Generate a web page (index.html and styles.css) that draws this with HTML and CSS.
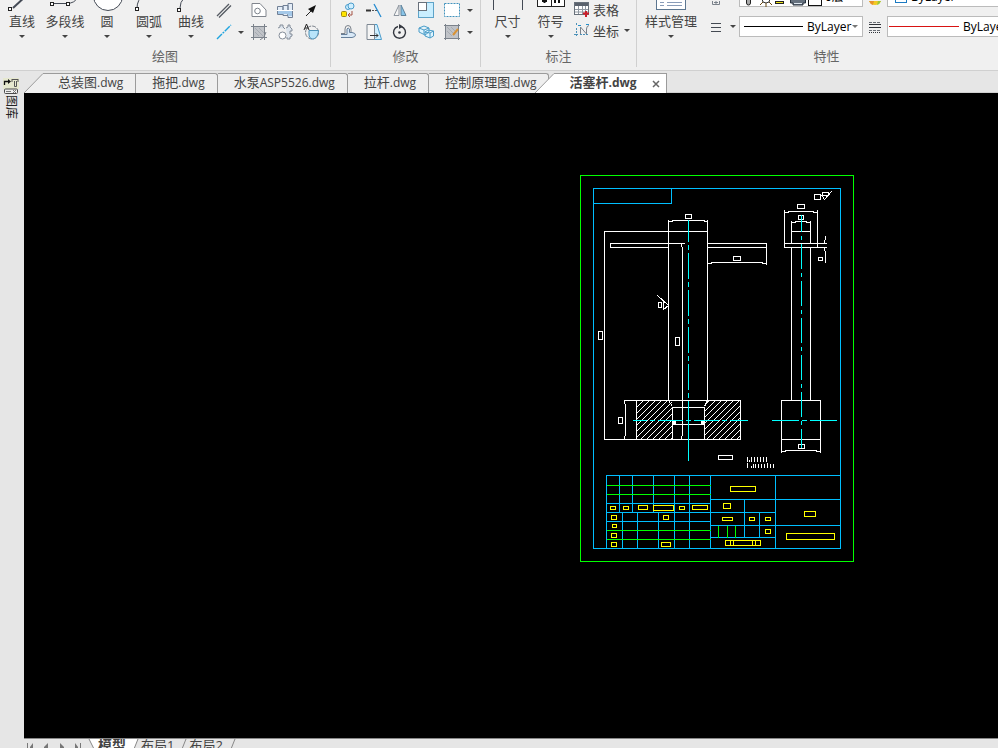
FILE: index.html
```html
<!DOCTYPE html>
<html lang="zh-CN">
<head>
  <meta charset="UTF-8" />
  <meta name="viewport" content="width=device-width, initial-scale=1.0"/>
  <title>活塞杆.dwg</title>
  <link rel="stylesheet" href="styles.css">
</head>
<body>
  <header class="ribbon">
    <!-- draw -->
    <section class="panel">
      <div class="panel-body">
        <button class="big"><svg width="30" height="12"><path d="M20 -5L6 8" stroke="#444a55" stroke-width="2"/><rect x="1.500" y="7.500" width="3" height="3" class="node"/></svg>直线<i class="caret"></i></button>
        <button class="big"><svg width="32" height="12"><path d="M4 3.500H18Q26 3 28 -2" class="ink"/><rect x="1.500" y="2.500" width="3" height="3" class="node"/><rect x="17.500" y="2.500" width="3" height="3" class="node"/></svg>多段线<i class="caret"></i></button>
        <button class="big"><svg width="32" height="12"><circle cx="17" cy="-4" r="14.500" fill="#fff" stroke="#444a55"/></svg>圆<i class="caret"></i></button>
        <button class="big"><svg width="30" height="12"><path d="M3 8Q3 0 10 -6" class="ink"/><rect x="1.500" y="7.500" width="3" height="3" class="node"/></svg>圆弧<i class="caret"></i></button>
        <button class="big"><svg width="30" height="12"><path d="M4 8Q4 2 8 -2" class="ink"/><rect x="1.500" y="8.500" width="3" height="3" class="node"/></svg>曲线<i class="caret"></i></button>
        <div class="tools draw-tools">
          <button aria-label="双线"><svg width="16" height="16"><path d="M1 14L13 2M3 15.500L15 3.500" stroke="#555a62" stroke-width="1.300"/></svg></button>
          <span></span>
          <button aria-label="边界"><svg width="16" height="16"><path d="M1 1.500H9L15 8V14.500H1Z" fill="#fff" stroke="#80858d"/><circle cx="6.500" cy="9" r="2.800" class="thin"/></svg></button>
          <button aria-label="轴"><svg width="16" height="16"><path d="M.5 4.500H6V12.500H.5ZM6 3.500H11V13.500H6ZM11 1.500H15.500V15.500H11Z" fill="#e4edf7" stroke="#718096"/><path d="M1 9H15V14H11V12H1Z" fill="#a4c8e8"/><path d="M0 8.500H16" stroke="#fff"/></svg></button>
          <button aria-label="箭头"><svg width="16" height="16"><path d="M3 14L9 8" stroke="#222"/><path d="M13 3L5 7L10 11Z" fill="#111"/></svg></button>
          <button aria-label="构造线"><svg width="16" height="16"><path d="M1 15L15 1" stroke="#1fa4df" stroke-width="1.400" stroke-dasharray="7 1 2 1"/></svg></button>
          <button aria-label="更多"><i class="caret"></i></button>
          <button aria-label="填充"><svg width="16" height="16"><rect x="3" y="3" width="10" height="10" fill="#c0c3c8"/><path d="M0 2.500H16M2.500 0V16M13.500 0V16M0 13.500H16" class="thin"/><path d="M4 4L12 12M8 4L13 9M4 8L8 12" stroke="#a6abb2"/><path d="M9 16Q14 14 15 8" class="thin"/></svg></button>
          <button aria-label="齿轮"><svg width="16" height="16"><path d="M1 4L3 3V1H6V3L8 5M9 4L11 3V1H13V3L15 5V7H13V10H15V12L13 13V15H10V13" fill="#dce4ed" stroke="#848d99"/><circle cx="5.500" cy="11.500" r="3.500" fill="#fff" stroke="#848d99"/></svg></button>
          <button aria-label="局部视图"><svg width="16" height="16"><circle cx="9" cy="8.500" r="6.500" class="thin" stroke-dasharray="4 1"/><path d="M6 6.500H15.500C15 12 13 15 9 15Q6 14 6 11Z" fill="#b8e4fa" stroke="#4c91b8"/><path d="M1 6L3.500 0L6 6M2 4H5" stroke="#222" fill="none"/></svg></button>
        </div>
      </div>
      <h2>绘图</h2>
    </section>

    <!-- modify -->
    <section class="panel">
      <div class="panel-body">
        <div class="tools modify-tools">
          <button aria-label="复制"><svg width="16" height="16"><circle cx="8" cy="5" r="2.500" class="blue"/><circle cx="11" cy="4" r="3" class="blue"/><rect x="1.500" y="9.500" width="5" height="5" rx="1" fill="#ffe400" stroke="#a18a13"/><path d="M8 13H12V9M8 13L10 11M8 13L10 15" stroke="#a55244" fill="none"/></svg></button>
          <button aria-label="延伸"><svg width="16" height="16"><path d="M0 8.500H5" stroke="#333" stroke-width="2"/><path d="M6 8.500H12" stroke="#555" stroke-dasharray="2 1"/><path d="M8 2L15 15" stroke="#258bd0" stroke-width="1.300"/></svg></button>
          <button aria-label="镜像"><svg width="16" height="16"><path d="M7 3V13.500H2Z" fill="#f5f5f5" stroke="#8c949e"/><path d="M9 3V13.500H14Z" fill="#88c4e8" stroke="#5f839c"/></svg></button>
          <button aria-label="缩放"><svg width="16" height="16"><rect x=".5" y=".5" width="15" height="15" fill="#c9eeff" stroke="#5ea3c8"/><rect x=".5" y=".5" width="8" height="8" fill="#fff" stroke="#69717b"/></svg></button>
          <button aria-label="打断"><svg width="16" height="16"><rect x=".5" y="1.500" width="15" height="13" fill="#fff" stroke="#4192bd" stroke-dasharray="2 1"/></svg></button>
          <button aria-label="更多"><i class="caret"></i></button>
          <button aria-label="偏移"><svg width="16" height="16"><path d="M1 9.500H5V5Q5 1.500 8 1.500T11 5V8.500" class="thin"/><path d="M1 13.500H12Q15.500 13 15.500 11T12 8.500H9.500V5Q8 3 7 5V10.500H1" fill="#d9e9f7" stroke="#667f9a"/></svg></button>
          <button aria-label="拉伸"><svg width="16" height="16"><path d="M8 .5H11L15.500 15.500H8Z" class="blue"/><path d="M1 .5H8.500V15.500H1Z" fill="#f5f5f5" stroke="#7d8792"/><path d="M4 11.500H12M10 9.500L12 11.500L10 13.500" stroke="#333" fill="none"/></svg></button>
          <button aria-label="旋转"><svg width="16" height="16"><path d="M6 2.500A6 6 0 1 0 9 2.500" fill="none" stroke="#343840" stroke-width="1.400"/><path d="M7 0L11 2.500L7 5Z" fill="#343840"/><circle cx="7.500" cy="8.500" r="1.300" fill="#343840"/></svg></button>
          <button aria-label="阵列"><svg width="16" height="16"><path d="M1 4L6 2L11 4V8L7 11L1 8ZM1 4L6 6L11 4M6 6V10M7 8L10 6L15.500 7V12L12 14L7 12ZM7 8L12 9L15.500 7M12 9V14" fill="#dff5ff" stroke="#4a9cc8"/></svg></button>
          <button aria-label="编辑填充"><svg width="16" height="16"><rect x="2" y="2" width="12" height="12" fill="#c0c3c8"/><path d="M0 1.500H16M1.500 0V16M14.500 0V16M0 14.500H16" class="thin"/><path d="M3 7L8 12M3 3L11 11M7 3L12 8" stroke="#a6abb2"/><path d="M9 11L14 5" stroke="#d99335" stroke-width="2"/></svg></button>
          <button aria-label="更多"><i class="caret"></i></button>
        </div>
      </div>
      <h2>修改</h2>
    </section>

    <!-- dimension -->
    <section class="panel">
      <div class="panel-body dim-body">
        <button class="big"><svg width="32" height="12"><path d="M1.500 0V10M30.500 0V10" class="ink"/></svg>尺寸<i class="caret"></i></button>
        <button class="big"><svg width="28" height="12"><rect x=".5" y="-9.500" width="27" height="16" fill="#fff" stroke="#222"/><path d="M14.500 0V6" stroke="#222"/><path d="M5 1H10M7.500 0V3M18 0V3M22 0V3" stroke="#111" stroke-width="2"/></svg>符号<i class="caret"></i></button>
        <div class="side-tools">
          <button><svg width="16" height="16"><rect x=".5" y="1.500" width="14" height="12" fill="#fff" stroke="#68717b"/><rect x="1" y="2" width="13" height="3" fill="#59616c"/><path d="M1 8.500H14M1 11H14M4.500 5V13M8.500 5V13M11.500 5V13" stroke="#9199a2"/><path d="M9 12.500H15M12 10V16" stroke="#cc1f2b" stroke-width="2"/></svg>表格</button>
          <button><svg width="16" height="16"><path d="M2.500 1V4M2.500 6V15M0 12.500H4M6 12.500H15" stroke="#4c91b8" stroke-dasharray="2 1"/><path d="M6.500 12V5L12.500 12V7Q12.500 4 15 3.500" class="thin"/><path d="M4 3.500H7M12 2.500H15" stroke="#268fc9"/></svg>坐标<i class="caret"></i></button>
        </div>
      </div>
      <h2>标注</h2>
    </section>

    <!-- properties -->
    <section class="panel">
      <div class="panel-body">
        <button class="big style-btn"><svg width="30" height="12"><rect x=".5" y="-9.500" width="29" height="19" fill="#fff" stroke="#5c7690"/><path d="M4 2.500H8M11 2.500H26M4 5.500H8M11 5.500H26" stroke="#899cb8"/></svg>样式管理<i class="caret"></i></button>
        <div class="props">
          <svg width="10" height="6"><path d="M1.500 0V3.500H8.500V0M3 1.500H7M5 0V3" class="thin"/></svg>
          <span></span>
          <label class="combo">
            <svg width="82" height="20"><rect x="6.500" y="8" width="4" height="10" rx="2" fill="#aaa" stroke="#222"/><circle cx="26" cy="12" r="4" fill="#fff" stroke="#333"/><path d="M20 18L23 15M26 16V20M32 18L29 15" stroke="#6b4a12"/><rect x="35" y="14" width="9" height="3" fill="#222"/><rect x="36" y="15" width="7" height="1" fill="#efe51a"/><path d="M50.500 12H65.500V16H63V18H53V16H50.500Z" fill="#66717e" stroke="#26303c"/><path d="M54 16.500H62" stroke="#dde6ee"/><rect x="68.500" y="5.500" width="13" height="13" fill="#fff" stroke="#111"/></svg>
            <select aria-label="图层"><option>0层</option></select>
          </label>
          <svg width="14" height="6"><path d="M1 0H13Q11 4 7 4T1 0" fill="#f2ca22"/><path d="M1 0H6L5 4Q2 3 1 0" fill="#e8922a"/><path d="M10 0H13Q12 3 9 4Z" fill="#9bc83b"/></svg>
          <label class="combo">
            <svg width="20" height="20"><rect x="7.500" y="5.500" width="11" height="10" fill="#fff" stroke="#1b7ac2"/></svg>
            <select aria-label="颜色"><option>ByLayer</option></select>
            <i class="caret"></i>
          </label>

          <svg width="10" height="10"><path d="M0 1.500H10M0 5.500H10M0 9.500H10" stroke="#444a52"/></svg>
          <i class="caret"></i>
          <label class="combo">
            <svg width="64" height="3"><path d="M4 1.500H63" stroke="#000"/></svg>
            <select aria-label="线型"><option>ByLayer</option></select>
            <i class="caret"></i>
          </label>
          <svg width="12" height="12"><path d="M0 1.500H12M0 9.500H12" stroke="#6a6f76" stroke-dasharray="3 1"/><path d="M0 3.500H12M0 6.500H12" stroke="#30343a"/><path d="M0 11.500H12" stroke="#30343a" stroke-dasharray="1 1"/></svg>
          <label class="combo">
            <svg width="72" height="3"><path d="M1 1.500H71" stroke="#d81313"/></svg>
            <select aria-label="线宽"><option>ByLayer</option></select>
            <i class="caret"></i>
          </label>
        </div>
      </div>
      <h2>特性</h2>
    </section>
  </header>

  <div class="workspace">
    <aside class="sidebar">
      <button>
        <svg width="16" height="17"><rect width="16" height="11" fill="#e6e8cf"/><path d="M1.500 7V3.500H6" stroke="#111" stroke-width="1.300" fill="none"/><path d="M5 1L8 3.500L5 6Z" fill="#111"/><path d="M9 1.500H15M9 1V4M15 1V4M11.500 3V8.500H13.500V3" fill="none" stroke="#555"/><rect x="1.500" y="11" width="13" height="4.500" rx="1" fill="#eee" stroke="#4b4b4b"/><path d="M3 13.500H8M10 12L13 15M13 12L10 15" stroke="#777"/></svg>
        <span>图库</span>
      </button>
    </aside>

    <div class="document">
      <nav class="file-tabs">
        <button class="tab first"><svg class="slant" width="20" height="20"><path d="M0 20L19 .5H20V20Z" fill="#efefef"/><path d="M0 20L19 .5H20" fill="none" stroke="#9b9b9b"/></svg><span class="tab-name">总装图<small>.dwg</small></span></button>
        <button class="tab"><span class="tab-name">拖把<small>.dwg</small></span></button>
        <button class="tab"><span class="tab-name">水泵<small>ASP5526.dwg</small></span></button>
        <button class="tab"><span class="tab-name">拉杆<small>.dwg</small></span></button>
        <button class="tab"><span class="tab-name">控制原理图<small>.dwg</small></span></button>
        <button class="tab active"><svg class="slant" width="20" height="20"><path d="M0 20L19 .5H20V20Z" fill="#fff"/><path d="M0 20L19 .5H20" fill="none" stroke="#9b9b9b"/></svg><span class="tab-name">活塞杆<small>.dwg</small></span><svg class="close" width="8" height="8"><path d="M1 1L7 7M7 1L1 7" stroke="#666" stroke-width="1.500"/></svg></button>
      </nav>

      <main class="canvas">
        <svg class="drawing" width="100%" height="100%">
          <defs>
            <pattern id="hatch" width="6" height="6" patternUnits="userSpaceOnUse">
              <path d="M0 5h1v1h-1zM1 4h1v1h-1zM2 3h1v1h-1zM3 2h1v1h-1zM4 1h1v1h-1zM5 0h1v1h-1z" fill="#fff"/>
            </pattern>
          </defs>
          <g transform="translate(-24 -93)">
            <rect x="636" y="400" width="36" height="39" fill="url(#hatch)"/>
            <rect x="704" y="400" width="36" height="39" fill="url(#hatch)"/>
          </g>
          <g transform="translate(-23.5 -92.5)">
            <!-- sheet frame -->
            <rect x="580" y="175" width="273" height="386" class="g"/>
            <path d="M593 188H840V548H593ZM593 203H671V188" class="b"/>

            <!-- front view -->
            <path class="w" d="M603 231H707M604 231V439M603 439H740V400H623M668 219V400L672 406M707 219V400L704 406
              M668 221H672V220H704V221H707M685 214H691V218H685Z
              M668 247H610V243H684M681 243V246L682 247V435L681 436V439
              M707 243H766V264M707 247H766M707 263H711V262H762V263H766M733 256H740V260H733Z
              M636 400V439M672 406V439M704 406V439M672 407H704M672 424H704
              M624 400V403L625 404V435L624 436V439
              M598 331H602V339H598ZM675 337H679V345H675ZM618 417H622V423H618Z
              M657 295L668 305L663 309V300M658 302H661V307H658Z"/>
            <path d="M672 421H675V424H672ZM701 421H704V424H701Z" fill="#fff" class="w"/>
            <path d="M688 219V401" class="c" stroke-dasharray="26 3 5 3" stroke-dashoffset="4"/>
            <path d="M688 401V460" class="c"/>
            <path d="M632 420H747" class="c" stroke-dasharray="25 3 5 3" stroke-dashoffset="11"/>

            <!-- side view -->
            <path class="w" d="M784 209V247H826M817 209V247M784 243H826M784 212H788V211H813V212H817M797 204H804V208H797Z
              M791 220V243M810 220V243M791 231H810M791 222H795V221H806V222H810M798 215H803V219H798Z
              M791 247V400M810 247V400M781 452V400H820V452M781 439H820M781 451H785V450H816V451H820M798 444H804V448H798Z
              M825 235V239L824 240V242M824 247V250L825 251V262M818 257H822V260H818Z
              M814 194H820V199H814ZM822 192H828V195H822ZM820 195H828M822 196L824 199L831 191"/>
            <path d="M801 214V447" class="c" stroke-dasharray="25 4 4 4" stroke-dashoffset="8"/>
            <path d="M771 420H798M801 420H806M809 420H836" class="c"/>

            <!-- notes -->
            <path class="w" d="M718 455H732V459H718ZM747 456V461M749 459V461M751 456V461M754 456V461M757 456V461M760 456V461M763 456V461M766 456V461
              M747 462V467M751 465V467M753 463V467M755 463V467M758 463V467M761 463V467M764 463V467M767 462V467M770 463V467M773 463V467"/>

            <!-- title block -->
            <path class="b" d="M606 548V475H840M619 475V512M632 475V512M653 475V512M674 475V548M689 475V548M710 475V548M775 475V548
              M606 503H710M606 512H710M606 521H710M622 512V548M637 512V548M658 512V548
              M710 499H840M710 525H840M710 512H775M710 537H775M744 499V537M759 512V537"/>
            <path class="g" d="M606 485H710M606 494H710M606 530H710M606 539H710M718 525V537M727 525V537M735 525V537"/>
            <path class="y" d="M610 506H615V509H610ZM623 506H628V509H623ZM638 505H647V509H638ZM653 505H673V510H653ZM679 506H684V509H679ZM692 505H707V509H692Z
              M611 515H616V519H611ZM663 515H668V519H663ZM612 524H616V527H612ZM611 533H616V537H611ZM611 542H616V546H611ZM661 542H670V546H661Z
              M730 486H755V491H730ZM723 503H730V508H723ZM722 517H732V520H722ZM749 517H754V520H749ZM765 517H770V520H765ZM765 529H770V533H765Z
              M804 511H815V516H804ZM786 533H834V539H786ZM725 540H760V545H725ZM730 540V545M733 540V545M752 540V545M755 540V545"/>
          </g>
        </svg>
      </main>

      <footer class="layout-tabs">
        <div class="layout-nav">
          <button aria-label="首页"><svg width="8" height="10"><path d="M1.500 4V10" stroke="#777"/><path d="M7 4V10H4V8Z" fill="#777"/></svg></button>
          <button aria-label="上一个"><svg width="8" height="10"><path d="M6 4V10H2V8Z" fill="#777"/></svg></button>
          <button aria-label="下一个"><svg width="8" height="10"><path d="M2 4V10H6V8Z" fill="#777"/></svg></button>
          <button aria-label="末页"><svg width="8" height="10"><path d="M6.500 4V10" stroke="#777"/><path d="M1 4V10H4V8Z" fill="#777"/></svg></button>
        </div>
        <button class="layout active"><svg width="10" height="10"><path d="M1 0L6 10H10V0Z" fill="#fff"/><path d="M1 0L6 10" stroke="#888"/></svg><span>模型</span></button>
        <button class="layout"><svg width="10" height="10"><path d="M0 0H7L3 10H0Z" fill="#fff"/><path d="M7 0L3 10" stroke="#888"/></svg><span>布局1</span></button>
        <button class="layout"><svg width="10" height="10"><path d="M7 0L3 10" stroke="#888"/></svg><span>布局2</span></button>
        <svg width="10" height="10"><path d="M7 0L3 10" stroke="#888"/></svg>
      </footer>
    </div>
  </div>
</body>
</html>
```

FILE: styles.css
```css
:root {
  --ribbon: #f0f0f0;
  --bar: #e6e6e6;
  --border: #9b9b9b;
  --line: #d0d0d0;
  --text: #444;
}

* {
  box-sizing: border-box;
}

body {
  margin: 0;
  height: 100vh;
  display: flex;
  flex-direction: column;
  overflow: hidden;
  background: var(--bar);
  color: var(--text);
  font-family: "Open Sans", "Noto Sans CJK SC", sans-serif;
  font-size: 13px;
}

button {
  display: flex;
  align-items: center;
  justify-content: center;
  padding: 0;
  border: none;
  background: none;
  color: inherit;
  font: inherit;
  white-space: nowrap;
}

svg {
  display: block;
  flex-shrink: 0;
}

.ink {
  fill: none;
  stroke: #444a55;
}

.node {
  fill: #fff;
  stroke: #222;
}

.thin {
  fill: none;
  stroke: #7b828b;
}

.blue {
  fill: #cfefff;
  stroke: #4b9ccb;
}

.caret {
  flex-shrink: 0;
  border: 3px solid transparent;
  border-top-color: #444;
  border-bottom: none;
}

/* ribbon */
.ribbon {
  display: flex;
  flex-shrink: 0;
  height: 71px;
  background: var(--ribbon);
  border-bottom: 1px solid var(--line);
  overflow: hidden;
}

.panel {
  display: flex;
  flex-direction: column;
  flex-shrink: 0;
  height: 67px;
  border-right: 1px solid var(--line);
}

.panel:nth-child(1) {
  width: 331px;
}

.panel:nth-child(2) {
  width: 150px;
}

.panel:nth-child(3) {
  width: 156px;
}

.panel:nth-child(4) {
  width: 380px;
}

.panel-body {
  display: flex;
  align-items: flex-start;
  height: 46px;
}

.panel h2 {
  margin: 0;
  color: #666;
  font-size: 13px;
  font-weight: 400;
  line-height: 20px;
  text-align: center;
}

.big {
  flex-direction: column;
  width: 42px;
  line-height: 18px;
}

.big:first-child {
  width: 44px;
}

.dim-body .big {
  width: 43px;
}

.big .caret {
  margin-top: 5px;
}

.big.style-btn {
  width: 68px;
}

.tools {
  display: grid;
  grid-template-rows: 20px 24px;
}

.draw-tools {
  grid-template-columns: 24px 10px 26px 26px 26px;
}

.modify-tools {
  grid-template-columns: repeat(5, 26px) 10px;
  padding-left: 4px;
}

.dim-body {
  padding-left: 5px;
}

.side-tools {
  display: grid;
  grid-template-rows: 18px 24px;
  justify-items: start;
  padding-left: 2px;
}

.side-tools button {
  gap: 3px;
}

.side-tools .caret {
  margin-left: 2px;
}

.props {
  display: grid;
  grid-template-columns: 22px 12px 124px 24px 124px;
  grid-template-rows: 7px 21px;
  row-gap: 9px;
  justify-items: center;
  align-items: center;
}

.props > :nth-child(-n+5) {
  align-self: end;
}

.combo {
  display: flex;
  align-items: center;
  width: 100%;
  height: 21px;
  padding-right: 4px;
  background: #fff;
  border: 1px solid #bbb;
}

.combo select {
  flex: 1;
  min-width: 0;
  padding: 0 0 0 3px;
  border: none;
  appearance: none;
  background: none;
  color: #000;
  font: inherit;
  font-size: 12px;
}

.combo .caret {
  border-top-color: #777;
}

/* workspace */
.workspace {
  display: flex;
  flex: 1;
  min-height: 0;
}

.sidebar {
  width: 24px;
  padding: 7px 0 0 3px;
}

.sidebar button {
  flex-direction: column;
  width: 16px;
}

.sidebar span {
  writing-mode: vertical-rl;
  text-orientation: sideways;
  color: #222;
  font-size: 12px;
  line-height: 16px;
}

.document {
  display: flex;
  flex: 1;
  flex-direction: column;
  min-width: 0;
}

.file-tabs {
  display: flex;
  align-items: flex-end;
  height: 22px;
  border-bottom: 1px solid var(--line);
}

.tab {
  height: 20px;
  margin-bottom: -1px;
  padding: 0 12px 0 16px;
  background: #efefef;
  border: 1px solid var(--border);
  border-width: 1px 1px 0 0;
  border-radius: 0 3px 0 0;
}

.tab-name {
  padding-bottom: 2px;
  line-height: 17px;
}

.tab small {
  font-size: 12px;
}

.slant {
  margin: -1px 14px 0 0;
}

.tab.first,
.tab.active {
  padding-left: 0;
  background: linear-gradient(#efefef, #efefef) 20px 0 no-repeat;
  border-top: 1px solid transparent;
  border-image: linear-gradient(90deg, transparent 20px, var(--border) 20px) 1;
}

.tab.active {
  z-index: 1;
  margin-left: -14px;
  padding-right: 6px;
  background: linear-gradient(#fff, #fff) 20px 0 no-repeat;
  font-weight: 700;
}

.close {
  margin: 1px 0 0 15px;
}

.canvas {
  flex: 1;
  min-height: 0;
  background: #000;
}

.drawing {
  shape-rendering: crispEdges;
}

.g, .b, .w, .c, .y {
  stroke-width: 1;
}

.g, .b, .c, .y, .w:not([fill]) {
  fill: none;
}

.g { stroke: #0f0; }
.b { stroke: #00bfff; }
.w { stroke: #fff; }
.c { stroke: #0ff; }
.y { stroke: #ff0; }

/* layout tabs */
.layout-tabs {
  display: flex;
  align-items: flex-start;
  height: 10px;
  border-top: 1px solid #888;
  overflow: hidden;
}

.layout-nav {
  display: flex;
  gap: 8px;
  width: 64px;
  padding-left: 2px;
}

.layout {
  align-items: flex-start;
}

.layout span {
  padding-right: 5px;
  line-height: 12px;
}

.layout.active span {
  background: #fff;
  font-size: 14px;
  font-weight: 700;
}
```
